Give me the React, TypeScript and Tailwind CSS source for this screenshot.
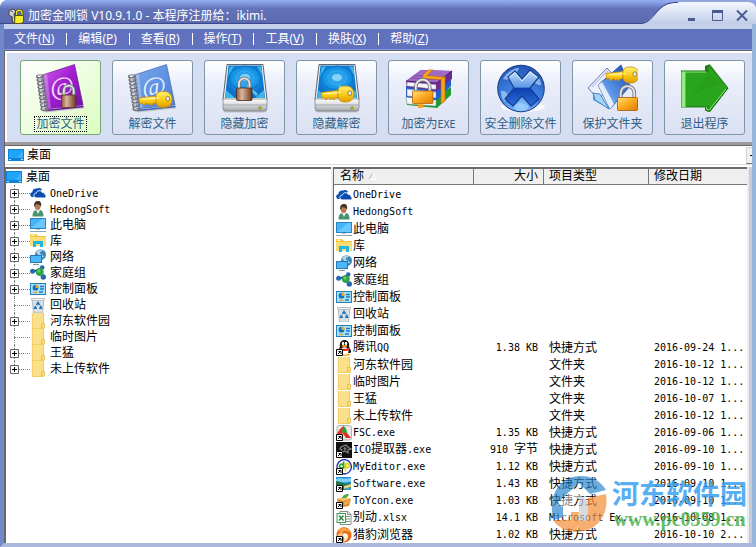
import type { ReactNode } from 'react';

/* ---------- text ---------- */

// Chinese runs are full width (12px), Latin runs are half width (6px per character).
function Mixed({ text, latin = "font-['DejaVu_Sans_Mono',monospace] text-[10px]" }: { text: string; latin?: string }) {
  const runs = text.match(/[\x00-\xff]+|[^\x00-\xff]+/g) ?? [];
  return (
    <>
      {runs.map((run, i) =>
        run.charCodeAt(0) < 256 ? (
          <span key={i} className={latin}>
            {run}
          </span>
        ) : (
          <span key={i}>{run}</span>
        ),
      )}
    </>
  );
}

/* ---------- small icons ---------- */

function Svg16({ children }: { children: ReactNode }) {
  return (
    <svg viewBox="0 0 16 16" className="block h-4 w-4 shrink-0" aria-hidden="true">
      {children}
    </svg>
  );
}

const shortcut = (
  <g>
    <rect x="0" y="9" width="7" height="7" fill="#fff" />
    <path d="M.5 9.500h6v6h-6z" fill="none" stroke="#000" />
    <path d="M2 14l2.500-2.500M2.500 11.500h2.500V14" stroke="#000" fill="none" />
  </g>
);

type IconName =
  | 'desktop' | 'onedrive' | 'user' | 'pc' | 'library' | 'network' | 'homegroup' | 'control' | 'recycle' | 'folder'
  | 'qq' | 'fsc' | 'ico' | 'editor' | 'software' | 'toycon' | 'excel' | 'cheetah';

const icons: Record<IconName, ReactNode> = {
  desktop: (
    <>
      <rect x="0" y="2" width="16" height="12" fill="#0b83d8" />
      <rect x="1" y="3" width="14" height="8" fill="#22a4fb" />
      <path d="M9 11l6-7v7z" fill="#41b3fd" />
      <path d="M1 12.500h2M13 12.500h2" stroke="#bfe6ff" />
    </>
  ),
  onedrive: (
    <>
      <path d="M1 11.500C-.6 10 .2 7.500 2.300 7.200 2.300 4.800 4.500 3 7 3.500 8.500 2.500 11 2.800 12 4.500L6 12H2z" fill="#0c50b5" />
      <path d="M5 12.500C2.800 11 4 8.200 6.300 8.200 6.700 5.500 11 4.500 12.300 7.500 14 7.300 15 8.300 14.900 9.500 16.700 10 16.300 12.900 14.600 12.900H6z" fill="#0b4bb0" stroke="#fff" strokeWidth=".9" />
    </>
  ),
  user: (
    <>
      <path d="M2.500 15.500C2.500 11 4 9.500 6.500 9l4 0c2.500.8 3 3.500 3 6.500z" fill="#47936f" />
      <path d="M6 9l2 4 2-4z" fill="#e6f2ee" />
      <ellipse cx="7.600" cy="5" rx="3" ry="3.900" fill="#b97a56" />
      <path d="M4.200 5C3.700 1.500 5.500 0 8 0s3.800 2 3 5.500C10 3.500 7 3 5.800 3.300L5 6z" fill="#42352b" />
    </>
  ),
  pc: (
    <>
      <rect x="0" y="1" width="16" height="11" fill="#2b83c4" />
      <rect x="1" y="2" width="14" height="9" fill="#45b4fa" />
      <path d="M1 11L12 2h3v9z" fill="#6ac6ff" />
      <path d="M6 12h4v1H6z" fill="#b6c2ca" />
      <path d="M0 14.500h16" stroke="#91a6b4" />
    </>
  ),
  library: (
    <>
      <path d="M0 1h6l2 2h8v3H0z" fill="#f1c438" />
      <rect x="1" y="1.500" width="4" height="1.500" fill="#fff3b6" />
      <path d="M0 4h16v9H0z" fill="#fbdc75" />
      <path d="M3 8h10v6h-3v-3H6v3H3z" fill="#21b5e8" />
    </>
  ),
  network: (
    <>
      <circle cx="10.500" cy="5.700" r="5.500" fill="#3e86b4" />
      <path d="M6 3c2-3 6-3 7-2-1 2-3 1-3 3s3 1 4 4c-2 1-5 0-8-5z" fill="#a9d3e6" />
      <rect x="0" y="6" width="12" height="8" fill="#247ab9" />
      <rect x="1" y="7" width="10" height="6" fill="#4bb6fa" />
      <path d="M3 15.500h6M6 14h1" stroke="#7e97a6" />
    </>
  ),
  homegroup: (
    <>
      <path d="M2.500 6.500L10 7l2-5M10 7l3 5" stroke="#84aac4" strokeWidth=".8" />
      <circle cx="2.600" cy="6.300" r="2.500" fill="#2468b4" />
      <circle cx="12.200" cy="2.500" r="2.300" fill="#2468b4" />
      <circle cx="13.300" cy="12" r="2.700" fill="#2468b4" />
      <circle cx="9.800" cy="7" r="3.900" fill="#30a34a" />
      <circle cx="9" cy="6" r="1.500" fill="#67cf6d" />
    </>
  ),
  control: (
    <>
      <rect x="0" y="2" width="16" height="12" fill="#2380ba" />
      <rect x="1" y="3" width="14" height="10" fill="#a8e1fc" />
      <circle cx="5.500" cy="6.700" r="2.900" fill="#1473bd" />
      <path d="M5.500 6.700V3.500A3 3 0 0 1 8.500 7z" fill="#f8a823" />
      <path d="M10 5.500h4M10 8h4M9 11h4" stroke="#187cc3" strokeWidth="1.300" />
      <path d="M3 11.500h4" stroke="#ee9a23" strokeWidth="1.300" />
    </>
  ),
  recycle: (
    <>
      <path d="M2 2h12l-1.500 14h-9z" fill="#dbe0e3" stroke="#a4adb2" strokeWidth=".8" />
      <path d="M1.500 1.500h13l-.5 2H2z" fill="#f3f5f6" stroke="#a7b0b5" strokeWidth=".7" />
      <path d="M6.500 8L8 5.500 9.600 8M10.300 8.700L11.500 11.300H9M7 11.300H4.500L5.700 9" stroke="#1878c4" strokeWidth="1.600" fill="none" />
    </>
  ),
  folder: (
    <>
      <path d="M2 0h12v16H2z" fill="#f0cb5b" />
      <path d="M2 0h11.500v16H2z" fill="#fbe08a" />
      <path d="M11.500 10.500h3V15h-3z" fill="#fbe08a" stroke="#e3b73c" strokeWidth=".8" />
      <path d="M2.300 0v15.600H12M13.600 0v10" stroke="#eec453" strokeWidth=".7" fill="none" />
    </>
  ),
  qq: (
    <>
      <ellipse cx="8.500" cy="14.600" rx="5.500" ry="1.400" fill="#f3a40f" />
      <path d="M3 13C.7 13 3 8 4 7 3 2 6 0 8.500 0s5.500 2 4.500 7c1 1 3.500 6 1 6z" fill="#151515" />
      <ellipse cx="8.500" cy="11" rx="4" ry="3.800" fill="#fff" />
      <ellipse cx="7" cy="3.500" rx="1.200" ry="1.700" fill="#fff" />
      <ellipse cx="10" cy="3.500" rx="1.200" ry="1.700" fill="#fff" />
      <ellipse cx="8.500" cy="6" rx="3" ry="1" fill="#f9a512" />
      <path d="M3.500 7.500c3 1.800 7 1.800 10 0l.3 1.900c-3 2-8 2-10.600 0z" fill="#ea2420" />
      {shortcut}
    </>
  ),
  fsc: (
    <>
      <rect x="1" y=".5" width="14.500" height="14.500" rx="2" fill="#e9e9e9" stroke="#b2b2b2" />
      <path d="M8 1C4 3 1.500 7 1 10l6-1.500z" fill="#e33122" />
      <path d="M8 1L6 8l4 1z" fill="#f4f4f4" />
      <path d="M7 1c3 1 4 4 4 8L5 7c2-1 2-4 2-6z" fill="#28a337" />
      <path d="M6 7l5 1 4 5h-5z" fill="#df2e20" />
      {shortcut}
    </>
  ),
  ico: (
    <>
      <rect width="16" height="16" fill="#111" />
      <path d="M5 5l5-2 3 3 2 1-3 1v3l-3-2-4 2 1-3-2-1z" fill="none" stroke="#898989" strokeWidth="1.200" />
      <circle cx="9" cy="6.500" r="1.500" fill="#777" />
      {shortcut}
    </>
  ),
  editor: (
    <>
      <circle cx="8.200" cy="7.800" r="7.200" fill="#fff" stroke="#1a2cbc" strokeWidth="1.300" />
      <circle cx="5.600" cy="7.200" r="2" fill="none" stroke="#29a032" strokeWidth="1.800" />
      <path d="M7.700 2.500v7" stroke="#29a032" strokeWidth="1.600" />
      <circle cx="11.400" cy="6.500" r="2" fill="none" stroke="#e8d51d" strokeWidth="1.800" />
      <path d="M9.500 4v8.500" stroke="#e8d51d" strokeWidth="1.600" />
      {shortcut}
    </>
  ),
  software: (
    <>
      <rect x="0" y="1" width="15" height="13" fill="#2b8edc" />
      <path d="M0 3c4-2 7 1 15-1v4c-5-1-9 2-15 0z" fill="#7fd3f5" />
      <path d="M0 5l5 1 5 2 5-1v7H0z" fill="#267344" />
      <path d="M8 10l7-2v3l-7 2z" fill="#d9d38b" />
      <path d="M9 12h6v2H9z" fill="#3ba1d5" />
      {shortcut}
    </>
  ),
  toycon: (
    <>
      <path d="M1 6l7-2 7 2-2 7-6 1-5-3z" fill="#d78a2d" />
      <path d="M1 6l6 2 8-2-7-2z" fill="#f6c471" />
      <path d="M6 5c1-3 3-4 7-4-1 3-3 4-5 4z" fill="#4fa83c" />
      <path d="M8 9l6-2-1.500 4L8 12z" fill="#eea94b" />
      {shortcut}
    </>
  ),
  excel: (
    <>
      <path d="M4 1.500h8l3 3v10H4z" fill="#fff" stroke="#8a8a8a" />
      <path d="M11.500 1.500v3H15" fill="none" stroke="#8a8a8a" />
      <path d="M9 6.500h5M9 9h5M9 11.500h5" stroke="#6d9f78" />
      <rect x="1" y="3.500" width="8.500" height="9" fill="#fff" stroke="#3a9a55" />
      <path d="M3 5.500l4.500 5M7.500 5.500l-4.500 5" stroke="#2a8a48" strokeWidth="1.600" />
    </>
  ),
  cheetah: (
    <>
      <circle cx="8" cy="7.800" r="7.600" fill="#e96d18" />
      <path d="M2 3C7-1 14 1 15.400 7c-3-4-8-4-10-1z" fill="#fba44c" />
      <path d="M6 8c2-3 6-2 6 1 0 4-3 5-5 6 2-3 2-4-1-7z" fill="#fff1df" />
      <path d="M1 10c2-5 4-4 6-5-1 3-2 5 0 8z" fill="#fdc898" />
      {shortcut}
    </>
  ),
};

function Icon({ name }: { name: IconName }) {
  return <Svg16>{icons[name]}</Svg16>;
}

/* ---------- toolbar pictures ---------- */

function Defs() {
  return (
    <svg className="absolute h-0 w-0" aria-hidden="true">
      <defs>
        <linearGradient id="purple" x1="0" y1="0" x2="1" y2="1">
          <stop offset="0" stopColor="#d266f0" />
          <stop offset=".45" stopColor="#a51fd2" />
          <stop offset="1" stopColor="#7410a8" />
        </linearGradient>
        <linearGradient id="azure" x1="0" y1="0" x2="1" y2="1">
          <stop offset="0" stopColor="#7fa9ea" />
          <stop offset=".5" stopColor="#5f92e2" />
          <stop offset="1" stopColor="#4a7fd6" />
        </linearGradient>
        <linearGradient id="bronze">
          <stop offset="0" stopColor="#8a5a40" />
          <stop offset=".35" stopColor="#dcb79b" />
          <stop offset="1" stopColor="#6a3822" />
        </linearGradient>
        <linearGradient id="gold" x1="0" y1="0" x2="0" y2="1">
          <stop offset="0" stopColor="#fff07a" />
          <stop offset=".5" stopColor="#fccf17" />
          <stop offset="1" stopColor="#e09a00" />
        </linearGradient>
        <linearGradient id="orange" x1="0" y1="0" x2="1" y2="1">
          <stop offset="0" stopColor="#ffe27a" />
          <stop offset=".5" stopColor="#faa91d" />
          <stop offset="1" stopColor="#e07808" />
        </linearGradient>
        <radialGradient id="platter" cx=".5" cy=".4">
          <stop offset="0" stopColor="#3fb0f4" />
          <stop offset=".6" stopColor="#1796e6" />
          <stop offset="1" stopColor="#0c72cc" />
        </radialGradient>
        <linearGradient id="steel" x1="0" y1="0" x2="0" y2="1">
          <stop offset="0" stopColor="#fff" />
          <stop offset=".5" stopColor="#d6d8da" />
          <stop offset="1" stopColor="#a3a6a8" />
        </linearGradient>
        <radialGradient id="globe" cx=".5" cy=".9" r=".9">
          <stop offset="0" stopColor="#8cc8ff" />
          <stop offset=".5" stopColor="#3e7ee0" />
          <stop offset="1" stopColor="#2456b4" />
        </radialGradient>
        <linearGradient id="cross" x1="0" y1="0" x2="0" y2="1">
          <stop offset="0" stopColor="#c8e4fc" />
          <stop offset=".48" stopColor="#5a98e6" />
          <stop offset=".5" stopColor="#0c3fb0" />
          <stop offset="1" stopColor="#2c6fd8" />
        </linearGradient>
        <linearGradient id="page" x1="0" y1="1" x2="1" y2="0">
          <stop offset="0" stopColor="#cfe6ff" />
          <stop offset=".4" stopColor="#5b96e8" />
          <stop offset="1" stopColor="#1344ac" />
        </linearGradient>
      </defs>
    </svg>
  );
}

function Padlock({ x, y, w, h, fill, dark }: { x: number; y: number; w: number; h: number; fill: string; dark: string }) {
  const l = x + w * 0.16;
  const r = x + w * 0.84;
  const radius = (r - l) / 2;
  const shackle = `M${l} ${y + 1}V${y - h * 0.35}a${radius} ${radius} 0 0 1 ${r - l} 0V${y + 1}`;
  return (
    <g>
      <path d={shackle} fill="none" stroke="#74777c" strokeWidth="3.600" />
      <path d={shackle} fill="none" stroke="#e4e6ea" strokeWidth="1.800" />
      <rect x={x} y={y} width={w} height={h} rx="1" fill={fill} stroke={dark} strokeWidth=".8" />
    </g>
  );
}

function Key({ x, y }: { x: number; y: number }) {
  return (
    <g transform={`translate(${x} ${y})`}>
      <path d="M-25-1.500L-8-3.500v7l-3 .5-1 2-2-1.500-2 1-1.500-2-2.500 2.500-2-2.500-2.500.5z" fill="url(#gold)" stroke="#c88a08" strokeWidth=".8" />
      <path d="M-8-4C-7-8-3-8 0-8 5-8 8-4.500 8 0S5 8 0 8-7 7-8 3z" fill="url(#gold)" stroke="#c88a08" strokeWidth=".8" />
      <path d="M-22-.3L-5-1.500" stroke="#fff6a9" />
      <ellipse cx="3.800" cy="-.8" rx="1.900" ry="2.400" fill="#dce8f4" stroke="#9a6b06" strokeWidth=".8" />
    </g>
  );
}

function Notebook({ cover, edge }: { cover: string; edge: string }) {
  return (
    <g>
      <path d="M7 42l40-4 .8 6.500L10 48.500z" fill="#c3c6cd" />
      <path d="M8 43.500l39.500-4v2l-39 4.500z" fill="#fff" />
      <path d="M5 11.500L38.500.5 47 41 9 45z" fill={cover} stroke={edge} strokeWidth=".7" />
      <path d="M6 11.500l5-1.700L15 44l-5 .7z" fill="#fff" opacity=".28" />
      <path d="M9.500 46.500l38-4" stroke={edge} strokeWidth="1.500" />
      {[0, 1, 2, 3, 4, 5, 6, 7, 8, 9].map((i) => (
        <g key={i} transform={`translate(${i * 0.5} ${i * 3.6})`}>
          <ellipse cx="4" cy="12.500" rx="3.300" ry="1.500" fill="none" stroke="#70737b" strokeWidth="1.600" />
          <path d="M1.500 12c1-1 3-1 4.500-.6" stroke="#f1f1f4" strokeWidth=".8" fill="none" />
        </g>
      ))}
      <text x="14" y="31" fontSize="26" fill="#fff" opacity=".85" transform="rotate(-6 26 22)" className="font-['Liberation_Serif',serif]">
        @
      </text>
    </g>
  );
}

function Disk() {
  return (
    <g>
      <path d="M3 36h44v9.500q0 3-3 3H6q-3 0-3-3z" fill="#000" opacity=".15" />
      <path d="M7 .5h36l4 35H3z" fill="#e9edf1" stroke="#39434c" strokeWidth=".8" />
      <path d="M8.500 1.500h33L45 34H5z" fill="url(#platter)" />
      <path d="M9.500 3L14 2 8 13zM41 3l-4-1 6 11zM6 26l9 8H5.500zM44 26l-9 8h9.500z" fill="#58dcf5" opacity=".65" />
      <ellipse cx="25" cy="14" rx="16" ry="12" fill="none" stroke="#0b65bb" opacity=".7" />
      <ellipse cx="25" cy="14" rx="9" ry="7" fill="none" stroke="#69caf7" strokeDasharray="1 2" />
      <ellipse cx="25" cy="13.500" rx="5" ry="3.500" fill="#87d3f8" />
      <path d="M27 22l10 9" stroke="#68c8f4" strokeWidth="2.500" />
      <path d="M3 35h44v9q0 3-3 3H6q-3 0-3-3z" fill="url(#steel)" stroke="#777b80" strokeWidth=".7" />
      <path d="M3.500 41h43" stroke="#85898d" strokeWidth=".6" />
      <circle cx="40" cy="44" r="1.400" fill="#b3c018" stroke="#6d7410" strokeWidth=".4" />
    </g>
  );
}

const art: ReactNode[] = [
  <>
    <Notebook cover="url(#purple)" edge="#6c1297" />
    <Padlock x={25.5} y={31} w={14.5} h={12.5} fill="url(#bronze)" dark="#5a3422" />
  </>,
  <>
    <Notebook cover="url(#azure)" edge="#3c64b4" />
    <Key x={36} y={35.5} />
  </>,
  <>
    <Disk />
    <Padlock x={16.5} y={24} w={15.5} h={12.5} fill="url(#bronze)" dark="#4a2718" />
  </>,
  <>
    <Disk />
    <Key x={34} y={30} />
  </>,
  <>
    <path d="M2 31l30 3 15-11v8L33 44 3 41z" fill="#1f9a33" />
    <path d="M2 33l30 3v6L3 40z" fill="#f4f5f8" stroke="#7d8b92" strokeWidth=".5" />
    <path d="M2 22l30 3 15-11v8L33 36 2 33z" fill="#1d5fd0" />
    <path d="M3 25l29 3v6L3 32z" fill="#f4f5f8" stroke="#6b7fa9" strokeWidth=".5" />
    <path d="M2 17L17 6l31 1v8L33 27 3 23z" fill="#6a2c90" />
    <path d="M2 17L17 6l31 1-15 12z" fill="#a169c6" />
    <path d="M7 14l31 2M10 11.500l31 1.500" stroke="#7e43a8" strokeWidth=".8" />
    <path d="M3 18l29 2.500v5L3 22z" fill="#f6f4f8" stroke="#7b5f94" strokeWidth=".5" />
    <path d="M2 17l31 2 15-12" fill="none" stroke="#58207c" strokeWidth="1.200" />
    <path d="M24 6h5l-6 5.500 18 1.500V16l-22-1.500V11z" fill="#f6a41c" stroke="#ba6a0b" strokeWidth=".6" />
    <path d="M37 15l4-2.500V37l-4 3z" fill="#f6a41c" stroke="#ba6a0b" strokeWidth=".6" />
    <path d="M14 40h5v4h-5z" fill="#f6a41c" />
    <Padlock x={8.5} y={27} w={20.5} h={12.5} fill="url(#orange)" dark="#b56305" />
  </>,
  <>
    <ellipse cx="27" cy="43" rx="22" ry="5" fill="#fff" opacity=".8" />
    <circle cx="25" cy="24.500" r="23.300" fill="url(#globe)" stroke="#173b85" />
    <path d="M7 15c4-7 11-11 16-11-1 5-5 4-6 8s-5 4-10 3zM36 7c6 4 9 9 9 14-4 0-7-2-7-5s-3-5-2-9zM5 27c4-1 8 3 7 7s-2 3-3 4c-3-3-4-7-4-11z" fill="#a9cdf6" opacity=".75" />
    <path d="M18 42c4-4 9-3 14 0 1 2-2 5-7 5s-7-3-7-5z" fill="#9bd0ff" opacity=".7" />
    <path d="M12 13l7-6 7 8 8-9 9 7-9 11 9 11-8 7-9-10-9 10-8-7 9-11z" fill="url(#cross)" stroke="#173f92" strokeWidth="1.200" strokeLinejoin="round" />
    <path d="M13.500 13L19 8.500l7 8.500 8-9 7 5.500" fill="none" stroke="#e6f3ff" />
  </>,
  <>
    <path d="M5 30l18 15-3-1-15-8z" fill="#4ba7e6" />
    <path d="M0 24L19 4l8 9-16 23z" fill="#eef2ff" stroke="#5b66a2" strokeWidth=".9" />
    <path d="M4 23L19 7l5 7" fill="none" stroke="#c1c6e6" strokeWidth="1.300" />
    <path d="M5 29l7 1 9 15-14-9z" fill="#9fd6f8" stroke="#2d6fb9" strokeWidth=".8" />
    <path d="M10 21L33 1l9 21-20 23z" fill="url(#page)" stroke="#2a50a0" strokeWidth=".9" />
    <path d="M10 21l4-3 12 22-4 5z" fill="#f4f9ff" opacity=".85" />
    <Key x={43} y={11} />
    <Padlock x={29.5} y={33.5} w={20} h={13} fill="url(#orange)" dark="#a75708" />
  </>,
  <>
    <path d="M1 7h24V2l5-1.500L48.500 24 30 48l-5-1.500V43.500H1z" fill="#24851a" />
    <path d="M5.500 8H29V2l18.500 22L29 46v-4H5.500z" fill="#2aa41e" />
    <path d="M1.500 7.500H5.500V43H1.500z" fill="#95ec82" />
    <path d="M1 7h24.500V2.500l4-1.700M26 43v3.500l3.500 1L48 24" fill="none" stroke="#15730c" />
    <path d="M2 8h24M26.500 43l.2 2.500 2.600.5L46 25" fill="none" stroke="#8ce57b" />
    <path d="M6 40L28 10l14 10c-14 2-28 8-36 20z" fill="#239514" opacity=".3" />
  </>,
];

/* ---------- data ---------- */

const menus: [string, string][] = [
  ['文件', 'N'], ['编辑', 'P'], ['查看', 'R'], ['操作', 'T'], ['工具', 'V'], ['换肤', 'X'], ['帮助', 'Z'],
];

const tools = ['加密文件', '解密文件', '隐藏加密', '隐藏解密', '加密为EXE', '安全删除文件', '保护文件夹', '退出程序'];

const tree: [IconName, string, boolean][] = [
  ['onedrive', 'OneDrive', true],
  ['user', 'HedongSoft', true],
  ['pc', '此电脑', true],
  ['library', '库', true],
  ['network', '网络', true],
  ['homegroup', '家庭组', true],
  ['control', '控制面板', true],
  ['recycle', '回收站', false],
  ['folder', '河东软件园', true],
  ['folder', '临时图片', false],
  ['folder', '王猛', true],
  ['folder', '未上传软件', true],
];

const files: [IconName, string, string, string, string][] = [
  ['onedrive', 'OneDrive', '', '', ''],
  ['user', 'HedongSoft', '', '', ''],
  ['pc', '此电脑', '', '', ''],
  ['library', '库', '', '', ''],
  ['network', '网络', '', '', ''],
  ['homegroup', '家庭组', '', '', ''],
  ['control', '控制面板', '', '', ''],
  ['recycle', '回收站', '', '', ''],
  ['control', '控制面板', '', '', ''],
  ['qq', '腾讯QQ', '1.38 KB', '快捷方式', '2016-09-24 1...'],
  ['folder', '河东软件园', '', '文件夹', '2016-10-12 1...'],
  ['folder', '临时图片', '', '文件夹', '2016-10-12 1...'],
  ['folder', '王猛', '', '文件夹', '2016-10-07 1...'],
  ['folder', '未上传软件', '', '文件夹', '2016-10-12 1...'],
  ['fsc', 'FSC.exe', '1.35 KB', '快捷方式', '2016-09-06 1...'],
  ['ico', 'ICO提取器.exe', '910 字节', '快捷方式', '2016-09-10 1...'],
  ['editor', 'MyEditor.exe', '1.12 KB', '快捷方式', '2016-09-10 1...'],
  ['software', 'Software.exe', '1.43 KB', '快捷方式', '2016-09-10 1...'],
  ['toycon', 'ToYcon.exe', '1.03 KB', '快捷方式', '2016-09-10 1...'],
  ['excel', '别动.xlsx', '14.1 KB', 'Microsoft Ex...', '2016-10-08 1...'],
  ['cheetah', '猎豹浏览器', '1.02 KB', '快捷方式', '2016-10-10 2...'],
];

/* ---------- parts ---------- */

function TitleBar() {
  return (
    <header className="flex h-6 rounded-tl-lg bg-linear-to-b from-[#8fabee] from-5% via-[#6474bb] via-35% to-[#5a69ad]">
      <div className="flex min-w-0 flex-1 items-center gap-1 border-b border-[#3a4790] pt-2 pl-2">
        <Svg16>
          <path d="M1 3l4-2 3 2-2 3 1 8-2 1-1-6-3-2z" fill="#d4d4cc" stroke="#33332c" strokeWidth=".8" />
          <path d="M3 3l2 1M4 8v6" stroke="#55554d" />
          <path d="M8.500 8V4.500a2.800 2.800 0 0 1 5.500 0V8" fill="none" stroke="#343400" strokeWidth="2.600" />
          <path d="M8.500 8V4.500a2.800 2.800 0 0 1 5.500 0V8" fill="none" stroke="#f5f02c" strokeWidth="1.300" />
          <path d="M7 7.500h8.500V14L13 15.500H6.500z" fill="#f7ee2b" stroke="#57530a" />
        </Svg16>
        <h1 className="truncate text-[12px] leading-4 text-white">
          <Mixed text="加密金刚锁 V10.9.1.0 - 本程序注册给：ikimi." latin="font-['Noto_Sans','Open_Sans',sans-serif] text-[12px] whitespace-pre" />
        </h1>
      </div>
      <svg viewBox="0 0 40 24" className="h-6 w-10 shrink-0" aria-hidden="true">
        <defs>
          <linearGradient id="tab" x1="0" y1="0" x2="0" y2="1">
            <stop offset="0" stopColor="#f4f7fe" />
            <stop offset="1" stopColor="#bfcde8" />
          </linearGradient>
        </defs>
        <path d="M0 24C16 24 18 3 38 2.500h2V24z" fill="url(#tab)" />
        <path d="M0 23.500h4C17 22 18 3.500 36 2.500h4" fill="none" stroke="#3a4790" />
      </svg>
      <div className="flex items-center gap-2 rounded-tr-lg border-t-2 border-[#8fa5dc] bg-linear-to-b from-[#f4f7fe] to-[#bfcde8] pt-1 pr-[6px] pl-2">
        <button type="button" aria-label="最小化" className="h-4 w-4">
          <svg viewBox="0 0 16 16" className="h-4 w-4"><path d="M2 12.500h7" stroke="#4d5b90" strokeWidth="3" /></svg>
        </button>
        <button type="button" aria-label="最大化" className="h-4 w-4">
          <svg viewBox="0 0 16 16" className="h-4 w-4"><path d="M2.500 4v9.500h10V4" fill="none" stroke="#4d5b90" /><path d="M2 4.500h11" stroke="#4d5b90" strokeWidth="3" /></svg>
        </button>
        <button type="button" aria-label="关闭" className="h-4 w-4">
          <svg viewBox="0 0 16 16" className="h-4 w-4"><path d="M3 3.500l10 10M13 3.500l-10 10" stroke="#4d5b90" strokeWidth="2" /></svg>
        </button>
      </div>
    </header>
  );
}

function MenuBar() {
  return (
    <nav className="flex h-[21px] items-center border-b border-[#7d94ee] bg-[#6071bd] pl-[10px] text-[12px] leading-4 text-white">
      {menus.map(([label, key], i) => (
        <div key={key} className="flex items-center">
          {i > 0 && <span className="mr-[11px] ml-3 h-3 w-px bg-white" />}
          <button type="button" className="whitespace-nowrap">
            {label}
            <span className="font-['Noto_Sans','Open_Sans',sans-serif]">
              (<u>{key}</u>)
            </span>
          </button>
        </div>
      ))}
    </nav>
  );
}

function ToolBar() {
  return (
    <div className="flex h-[89px] gap-[11px] bg-[#d6def3] pt-[7px] pl-[13px]">
      {tools.map((label, i) => (
        <button
          key={label}
          type="button"
          className={
            i === 0
              ? 'flex h-[75px] w-[81px] shrink-0 flex-col items-center rounded-[3px] border border-[#76a57c] bg-linear-to-br from-white to-[#dcfcc0] pt-[3px]'
              : 'flex h-[75px] w-[81px] shrink-0 flex-col items-center rounded-[3px] border border-[#7f95a6] bg-linear-to-b from-white via-[#eaeefa] via-30% to-[#dbe1f3] pt-[3px]'
          }
        >
          <svg viewBox="0 0 50 50" className="h-[50px] w-[50px] shrink-0" aria-hidden="true">
            {art[i]}
          </svg>
          <span
            className={
              i === 0
                ? 'mt-[2px] border border-dotted border-black px-px text-[12px] leading-[14px] whitespace-nowrap text-[#2f6086]'
                : 'mt-[2px] border border-transparent text-[12px] leading-[14px] whitespace-nowrap text-[#2f6086]'
            }
          >
            <Mixed text={label} />
          </span>
        </button>
      ))}
    </div>
  );
}

function AddressBar() {
  return (
    <div className="flex h-[19px] items-center border-t border-[#666] bg-white pl-[3px]">
      <Icon name="desktop" />
      <select aria-label="位置" className="h-[18px] flex-1 appearance-none bg-white pl-[3px] text-[12px] leading-[18px] text-black outline-none">
        <option>桌面</option>
      </select>
      <span className="flex h-[17px] w-[6px] items-center justify-end border border-r-0 border-[#d4d4d4] border-b-[#777] bg-[#f0f0f0]">
        <span className="h-px w-[2px] bg-black" />
      </span>
    </div>
  );
}

function Tree() {
  return (
    <section aria-label="文件夹" className="w-[326px] shrink-0 border-t-2 border-l border-[#6b6b6b] bg-white">
      <div className="flex h-4 items-center gap-1 text-[12px] leading-4">
        <Icon name="desktop" />
        桌面
      </div>
      <ul>
        {tree.map(([icon, label, open], i) => (
          <li key={label} className="flex h-4 items-center text-[12px] leading-4">
            <span className="relative flex h-4 w-6 shrink-0 items-center">
              <span
                className={
                  i === tree.length - 1
                    ? 'absolute top-0 left-2 h-2 border-l border-dotted border-[#808080]'
                    : 'absolute top-0 left-2 h-4 border-l border-dotted border-[#808080]'
                }
              />
              <span className="ml-2 w-4 border-t border-dotted border-[#808080]" />
              {open && (
                <button type="button" aria-label={`展开 ${label}`} className="absolute top-[4px] left-[4px] h-[9px] w-[9px] bg-white">
                  <svg viewBox="0 0 9 9" className="block h-[9px] w-[9px]">
                    <path d="M.5.5h8v8h-8z" fill="#fff" stroke="#666" />
                    <path d="M2 4.500h5M4.500 2v5" stroke="#000" />
                  </svg>
                </button>
              )}
            </span>
            <Icon name={icon} />
            <span className="ml-1 whitespace-nowrap">
              <Mixed text={label} />
            </span>
          </li>
        ))}
      </ul>
    </section>
  );
}

function FileList() {
  const head = 'border-r border-[#777] p-0 text-left font-normal';
  return (
    <section aria-label="文件列表" className="relative min-w-0 flex-1 border-t-2 border-l border-[#6b6b6b] bg-white">
      <table className="w-full table-fixed border-separate border-spacing-0 text-[12px] leading-4">
        <colgroup>
          <col className="w-[140px]" />
          <col className="w-[70px]" />
          <col className="w-[105px]" />
          <col />
        </colgroup>
        <thead>
          <tr className="h-[16px] bg-[#efefef]">
            <th className={`${head} border-b`}>
              <button type="button" className="flex h-[15px] items-center gap-1 pl-[6px] leading-[15px]">
                名称
                <svg viewBox="0 0 9 7" className="h-[7px] w-[9px]" aria-hidden="true">
                  <path d="M.5 6.500L4.500.5" stroke="#b5b5b5" />
                  <path d="M4.500.5l4 6h-8" stroke="#fff" fill="none" />
                </svg>
              </button>
            </th>
            <th className={`${head} border-b`}>
              <button type="button" className="block h-[15px] w-full pr-[5px] text-right leading-[15px]">大小</button>
            </th>
            <th className={`${head} border-b`}>
              <button type="button" className="block h-[15px] pl-[5px] leading-[15px]">项目类型</button>
            </th>
            <th className="border-b border-[#777] p-0 text-left font-normal">
              <button type="button" className="block h-[15px] pl-[5px] leading-[15px]">修改日期</button>
            </th>
          </tr>
        </thead>
        <tbody>
          <tr aria-hidden="true" className="h-px" />
          {files.map(([icon, name, size, type, date], i) => (
            <tr key={i} className="h-[17px]">
              <td className="p-0">
                <span className="flex h-[17px] items-center gap-px pl-[2px] whitespace-nowrap">
                  <Icon name={icon} />
                  <span>
                    <Mixed text={name} />
                  </span>
                </span>
              </td>
              <td className="p-0 pr-[6px] text-right whitespace-nowrap"><Mixed text={size} /></td>
              <td className="p-0 pl-[5px] whitespace-nowrap"><Mixed text={type} /></td>
              <td className="p-0 pl-[5px] whitespace-nowrap"><Mixed text={date} /></td>
            </tr>
          ))}
        </tbody>
      </table>
      <Watermark />
    </section>
  );
}

function Watermark() {
  return (
    <div className="pointer-events-none absolute right-0 bottom-[11px] flex items-center gap-[3px] opacity-85">
      <svg viewBox="0 0 60 58" className="h-[58px] w-[60px]" aria-hidden="true">
        <path d="M5 46C-2 26 8 2 32 2c12 0 20 6 25 14L41 20 30 9 8 29l6 4v10z" fill="#2786cd" opacity=".8" />
        <path d="M29 12L8 31h6v12h8V31l8-7z" fill="#fff" opacity=".6" />
        <path d="M39 24l18-4c3 18-6 36-27 38l-3-12h12z" fill="#f5923c" opacity=".85" />
        <path d="M4 46h18v-8h8l-2 20C18 58 8 53 4 46z" fill="#f5923c" opacity=".85" />
        <path d="M30 20l9 7v20h-9z" fill="#c5cbd0" opacity=".8" />
      </svg>
      <div className="text-center leading-none">
        <div className="font-['Noto_Sans_CJK_SC',sans-serif] text-[27px] leading-[32px] font-bold whitespace-nowrap text-[#3ba0f2]">河东软件园</div>
        <div className="font-['Liberation_Serif',serif] text-[20px] leading-[20px] font-bold whitespace-nowrap text-[#4fb04b]">www.pc0359.cn</div>
      </div>
    </div>
  );
}

export default function App() {
  return (
    <div className="flex min-h-screen flex-col rounded-t-lg bg-[#6f84c6] font-['Liberation_Sans','Noto_Sans_CJK_SC',sans-serif] text-black">
      <Defs />
      <TitleBar />
      <div className="flex flex-1 flex-col border-r-4 border-b-4 border-l-4 border-r-[#98b6dc] border-b-[#a9b8dc] border-l-[#7188cb]">
        <div className="h-[5px] bg-[#c5d1ea]" />
        <MenuBar />
        <div className="flex flex-1 flex-col border-t border-l border-[#666] bg-[#e6ebf6]">
          <div className="border-t-2 border-l-2 border-white">
            <ToolBar />
          </div>
          <div className="h-[3px] bg-[#9b9b9b]" />
          <AddressBar />
          <div className="h-[3px] border-t border-[#dcdcdc] bg-white" />
          <div className="flex flex-1 gap-[2px]">
            <Tree />
            <FileList />
            <div className="w-[3px] bg-[#c9cbd2]" />
          </div>
        </div>
      </div>
    </div>
  );
}
